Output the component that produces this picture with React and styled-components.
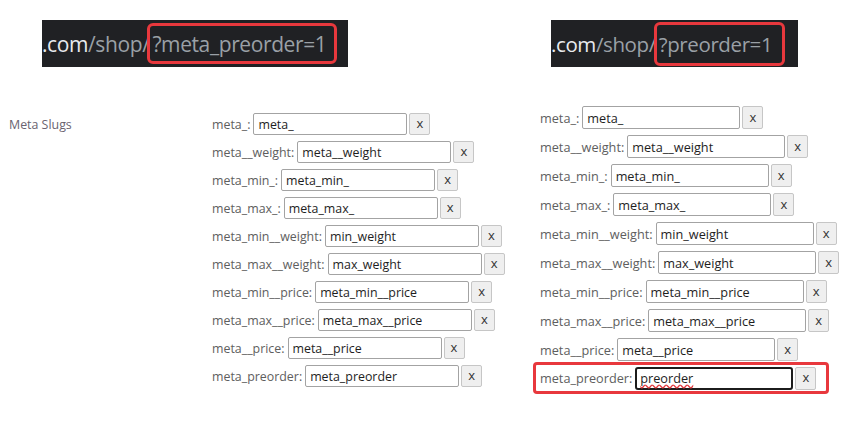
import styled, { createGlobalStyle } from "styled-components"

const GlobalStyle = createGlobalStyle`
  body {
    margin: 0;
    background: #fff;
    font-family: "Open Sans", "Noto Sans", sans-serif;
  }
`

const Page = styled.div`
  display: flex;
  width: 867px;
  height: 422px;
  overflow: hidden;
  background: #fff;
`

const Panel = styled.div`
  width: ${p => p.$width}px;
  display: flex;
  flex-direction: column;
  padding-top: 20px;
`

const UrlBar = styled.div`
  margin-left: ${p => p.$offset}px;
  width: ${p => p.$width}px;
  height: 47px;
  background: #202124;
  display: flex;
  align-items: center;
  font-size: ${p => p.$small ? 20.5 : 21}px;
  letter-spacing: -0.4px;
  color: #9aa0a6;
  white-space: nowrap;
  overflow: hidden;
`

const Host = styled.span`
  color: #e8eaed;
`

const Query = styled.span`
  display: flex;
  align-items: center;
  height: ${p => p.$tall ? 38 : 35}px;
  padding: 0 ${p => p.$tall ? 10 : 8}px 0 2px;
  margin-left: -2px;
  border: 3px solid #e8383d;
  border-radius: 6px;
`

const Body = styled.div`
  display: flex;
  margin-top: ${p => p.$top}px;
  margin-left: ${p => p.$left || 0}px;
`

const SideLabel = styled.div`
  width: 203px;
  padding-left: 9px;
  line-height: 30px;
  font-size: 12.4px;
  color: #6a6370;
`

const Form = styled.div`
  display: flex;
  flex-direction: column;
`

const Row = styled.div`
  display: flex;
  align-items: center;
  width: fit-content;
  height: ${p => p.$big ? 29 : 28}px;
  font-size: ${p => p.$big ? 12.7 : 12.4}px;
  ${p => p.$marked && `
    height: 26px;
    margin: -2px 0 0 -7px;
    padding: 0 10px 0 4px;
    border: 3px solid #e8383d;
    border-radius: 4px;
  `}
`

const Label = styled.span`
  color: #5e5e5e;
  margin-right: 3px;
  white-space: nowrap;
`

const Field = styled.input`
  box-sizing: border-box;
  width: ${p => p.$big ? 158 : 154}px;
  height: ${p => p.$big ? 23 : 22}px;
  padding: 0 4px;
  border: 1px solid #a3a3a3;
  border-radius: 2px;
  font-family: inherit;
  font-size: inherit;
  color: #1e1e1e;
  background: #fff;
  outline: none;
`

const FocusField = styled.div`
  box-sizing: border-box;
  display: flex;
  align-items: center;
  width: 158px;
  height: 23px;
  padding: 0 3px;
  border: 2px solid #1c1c1c;
  border-radius: 3px;
  color: #1e1e1e;
`

const Misspelled = styled.span`
  text-decoration: underline wavy #e0393e;
  text-decoration-skip-ink: none;
  text-underline-offset: 1px;
`

const Remove = styled.button`
  box-sizing: border-box;
  width: 21px;
  height: ${p => p.$big ? 23 : 22}px;
  margin-left: 2px;
  padding: 0 0 2px;
  border: 1px solid #c6c6c6;
  border-radius: 2px;
  background: #efefef;
  font-family: inherit;
  font-size: 13px;
  color: #333;
`

const slugs = [
  ["meta_:", "meta_"],
  ["meta__weight:", "meta__weight"],
  ["meta_min_:", "meta_min_"],
  ["meta_max_:", "meta_max_"],
  ["meta_min__weight:", "min_weight"],
  ["meta_max__weight:", "max_weight"],
  ["meta_min__price:", "meta_min__price"],
  ["meta_max__price:", "meta_max__price"],
  ["meta__price:", "meta__price"],
]

const SlugForm = ({ big, last }) => (
  <Form>
    {slugs.map(([label, value]) => (
      <Row key={label} $big={big}>
        <Label>{label}</Label>
        <Field $big={big} readOnly value={value} />
        <Remove $big={big}>x</Remove>
      </Row>
    ))}
    <Row $big={big} $marked={big}>
      <Label>meta_preorder:</Label>
      {big ? (
        <FocusField>
          <Misspelled>{last}</Misspelled>
        </FocusField>
      ) : (
        <Field readOnly value={last} />
      )}
      <Remove $big={big}>x</Remove>
    </Row>
  </Form>
)

const App = () => (
  <Page>
    <GlobalStyle />
    <Panel $width={530}>
      <UrlBar $offset={42} $width={306}>
        <Host>.com</Host>/shop/
        <Query>?meta_preorder=1</Query>
      </UrlBar>
      <Body $top={43}>
        <SideLabel>Meta Slugs</SideLabel>
        <SlugForm last="meta_preorder" />
      </Body>
    </Panel>
    <Panel $width={337}>
      <UrlBar $offset={21} $width={247} $small>
        <Host>.com</Host>/shop/
        <Query $tall>?preorder=1</Query>
      </UrlBar>
      <Body $top={36} $left={10}>
        <SlugForm big last="preorder" />
      </Body>
    </Panel>
  </Page>
)

export default App
